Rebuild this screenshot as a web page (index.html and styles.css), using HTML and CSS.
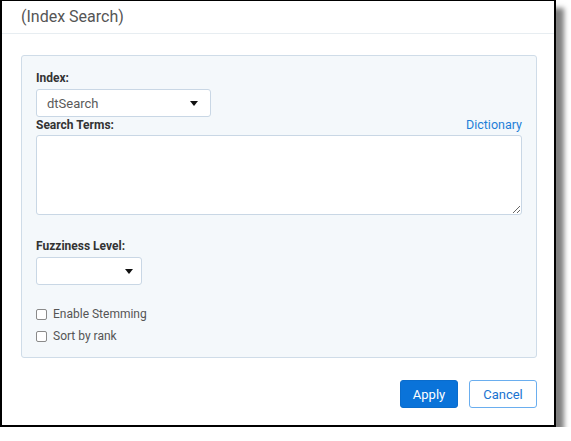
FILE: index.html
```html
<!DOCTYPE html>
<html>
<head>
<meta charset="utf-8">
<link rel="stylesheet" href="styles.css">
</head>
<body>
<div class="dialog">
  <div class="header"><span class="title">(Index Search)</span></div>
  <div class="panel">
    <div class="label">Index:</div>
    <div class="select wide"><span class="value">dtSearch</span><span class="caret"></span></div>
    <div class="label-row"><span class="label">Search Terms:</span><a class="link">Dictionary</a></div>
    <textarea class="terms"></textarea>
    <div class="label fuzz">Fuzziness Level:</div>
    <div class="select narrow"><span class="value"></span><span class="caret"></span></div>
    <label class="check first"><input type="checkbox" class="box"><span>Enable Stemming</span></label>
    <label class="check"><input type="checkbox" class="box"><span>Sort by rank</span></label>
  </div>
  <div class="footer">
    <button class="btn primary">Apply</button>
    <button class="btn secondary">Cancel</button>
  </div>
</div>
</body>
</html>
```
FILE: styles.css
```css
html, body { margin: 0; padding: 0; background: #ffffff; }
body { font-family: Roboto, "Liberation Sans", sans-serif; }
.dialog {
  box-sizing: border-box;
  width: 556px;
  height: 427px;
  border: 2px solid #000;
  border-top-width: 1px;
  background: #fff;
  box-shadow: 8px 8px 5px rgba(0,0,0,0.5);
}
.header {
  height: 32px;
  border-bottom: 1px solid #e7edf1;
  padding-left: 19px;
  display: flex;
  align-items: center;
}
.title { font-size: 16px; color: #555; line-height: 20px; }
.panel {
  margin: 21px 17px 0 19px;
  background: #f4f8fb;
  border: 1px solid #cfdce8;
  border-radius: 3px;
  padding: 14px 14px 13px 14px;
  display: flex;
  flex-direction: column;
  align-items: flex-start;
}
.label { font-size: 12px; font-weight: bold; color: #333; line-height: 16px; }
.select {
  box-sizing: border-box;
  height: 28px;
  background: #fff;
  border: 1px solid #c9d7e5;
  border-radius: 3px;
  display: flex;
  align-items: center;
  justify-content: space-between;
  padding: 0 12px 0 10px;
  margin-top: 3px;
}
.select.wide { width: 175px; }
.select.narrow { width: 106px; padding-right: 8px; }
.value { font-size: 13px; color: #5a5a5a; }
.caret {
  width: 0; height: 0;
  border-left: 4px solid transparent;
  border-right: 4px solid transparent;
  border-top: 5px solid #111;
}
.label-row {
  align-self: stretch;
  display: flex;
  justify-content: space-between;
  line-height: 16px;
  margin-top: 0;
}
.link { font-size: 12.5px; color: #1f7fd8; }
.terms {
  box-sizing: border-box;
  align-self: stretch;
  height: 80px;
  margin: 2px 0 0 0;
  border: 1px solid #c9d7e5;
  border-radius: 3px;
  background: #fff;
  resize: vertical;
  font-family: inherit;
}
.fuzz { margin-top: 23px; }
.check {
  display: flex;
  align-items: center;
  font-size: 12px;
  color: #555;
  line-height: 16px;
  margin-top: 6px;
}
.check.first { margin-top: 21px; }
.box {
  appearance: none;
  -webkit-appearance: none;
  box-sizing: border-box;
  width: 11px; height: 11px;
  margin: 0 6px 0 0;
  border: 1px solid #8a8a8a;
  border-radius: 2px;
  background: #fff;
}
.footer {
  display: flex;
  justify-content: flex-end;
  gap: 11px;
  margin: 22px 17px 0 0;
}
.btn {
  box-sizing: border-box;
  height: 28px;
  border-radius: 3px;
  font-family: inherit;
  font-size: 13px;
  padding: 0;
}
.primary { width: 58px; background: #0a73d9; border: 1px solid #0a6ccc; color: #fff; }
.secondary { width: 68px; background: #fff; border: 1px solid #6aaeef; color: #1a73d0; }
```
